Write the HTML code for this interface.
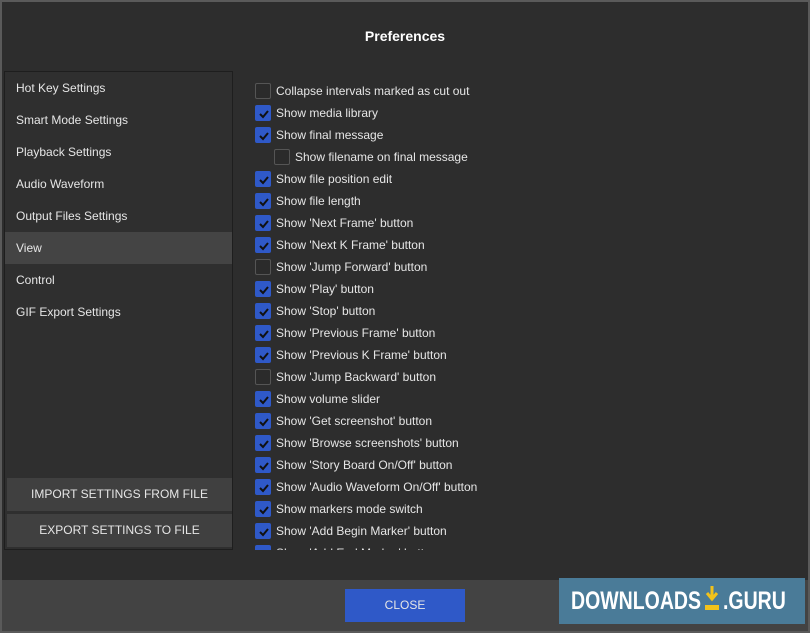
<!DOCTYPE html>
<html><head><style>
body{margin:0;width:810px;height:633px;background:#5a5a5a;font-family:"Liberation Sans",sans-serif;overflow:hidden;position:relative}
.win{position:absolute;left:2px;top:2px;width:806px;height:629px;background:#2d2d2d}
.title{position:absolute;top:28px;width:810px;text-align:center;color:#fff;font-weight:bold;font-size:14px;left:0}
.left{position:absolute;left:4px;top:71px;width:229px;height:479px;border:1px solid #1e1e1e;background:#2f2f2f;box-sizing:border-box}
.it{position:absolute;left:11px;color:#e6e6e6;font-size:12px}
.sel{position:absolute;left:0;top:160px;width:227px;height:32px;background:#444}
.btn{position:absolute;left:2px;width:225px;height:33px;background:#404040;color:#e6e6e6;font-size:12px;text-align:center;line-height:33px}
.row{position:absolute;left:255px;height:22px;color:#e6e6e6;font-size:12px;line-height:16px}
.cb{position:absolute;left:0;top:0;width:16px;height:16px;box-sizing:border-box;border:1px solid #555;background:#2b2b2b;border-radius:2px}
.cb.c{background:#2f59c8;border-color:#2f59c8}
.cb.c svg{position:absolute;left:2px;top:2px}
.lb{position:absolute;left:21px;top:0;white-space:nowrap}
.foot{position:absolute;left:2px;top:580px;width:806px;height:51px;background:#434343}
.close{position:absolute;left:345px;top:589px;width:120px;height:33px;background:#2f59c8;color:#e6e6e6;font-size:12px;text-align:center;line-height:33px}
.wm{position:absolute;left:559px;top:578px;width:246px;height:46px;background:#4a7b98;color:#fff;font-weight:bold;font-size:25px;line-height:46px}
.wm span{position:absolute;transform-origin:0 50%;transform:scaleX(0.78);white-space:nowrap}
</style></head><body>
<div class="win"></div>
<div class="title">Preferences</div>
<div class="left">
<div class="sel"></div>
<div class="it" style="top:9px">Hot Key Settings</div>
<div class="it" style="top:41px">Smart Mode Settings</div>
<div class="it" style="top:73px">Playback Settings</div>
<div class="it" style="top:105px">Audio Waveform</div>
<div class="it" style="top:137px">Output Files Settings</div>
<div class="it" style="top:169px">View</div>
<div class="it" style="top:201px">Control</div>
<div class="it" style="top:233px">GIF Export Settings</div>
<div class="btn" style="top:406px">IMPORT SETTINGS FROM FILE</div>
<div class="btn" style="top:442px">EXPORT SETTINGS TO FILE</div>
</div>
<div style="position:absolute;left:250px;top:80px;width:300px;height:470px;overflow:hidden">
<div style="position:absolute;left:-250px;top:-80px;width:600px;height:640px">
<div class="row" style="top:83px"><div class="cb"></div><div class="lb">Collapse intervals marked as cut out</div></div>
<div class="row" style="top:105px"><div class="cb c"><svg width="12" height="12"><path d="M2 6l3 3 5-6" stroke="#111" stroke-width="2" fill="none"/></svg></div><div class="lb">Show media library</div></div>
<div class="row" style="top:127px"><div class="cb c"><svg width="12" height="12"><path d="M2 6l3 3 5-6" stroke="#111" stroke-width="2" fill="none"/></svg></div><div class="lb">Show final message</div></div>
<div class="row" style="top:149px;left:274px"><div class="cb"></div><div class="lb">Show filename on final message</div></div>
<div class="row" style="top:171px"><div class="cb c"><svg width="12" height="12"><path d="M2 6l3 3 5-6" stroke="#111" stroke-width="2" fill="none"/></svg></div><div class="lb">Show file position edit</div></div>
<div class="row" style="top:193px"><div class="cb c"><svg width="12" height="12"><path d="M2 6l3 3 5-6" stroke="#111" stroke-width="2" fill="none"/></svg></div><div class="lb">Show file length</div></div>
<div class="row" style="top:215px"><div class="cb c"><svg width="12" height="12"><path d="M2 6l3 3 5-6" stroke="#111" stroke-width="2" fill="none"/></svg></div><div class="lb">Show 'Next Frame' button</div></div>
<div class="row" style="top:237px"><div class="cb c"><svg width="12" height="12"><path d="M2 6l3 3 5-6" stroke="#111" stroke-width="2" fill="none"/></svg></div><div class="lb">Show 'Next K Frame' button</div></div>
<div class="row" style="top:259px"><div class="cb"></div><div class="lb">Show 'Jump Forward' button</div></div>
<div class="row" style="top:281px"><div class="cb c"><svg width="12" height="12"><path d="M2 6l3 3 5-6" stroke="#111" stroke-width="2" fill="none"/></svg></div><div class="lb">Show 'Play' button</div></div>
<div class="row" style="top:303px"><div class="cb c"><svg width="12" height="12"><path d="M2 6l3 3 5-6" stroke="#111" stroke-width="2" fill="none"/></svg></div><div class="lb">Show 'Stop' button</div></div>
<div class="row" style="top:325px"><div class="cb c"><svg width="12" height="12"><path d="M2 6l3 3 5-6" stroke="#111" stroke-width="2" fill="none"/></svg></div><div class="lb">Show 'Previous Frame' button</div></div>
<div class="row" style="top:347px"><div class="cb c"><svg width="12" height="12"><path d="M2 6l3 3 5-6" stroke="#111" stroke-width="2" fill="none"/></svg></div><div class="lb">Show 'Previous K Frame' button</div></div>
<div class="row" style="top:369px"><div class="cb"></div><div class="lb">Show 'Jump Backward' button</div></div>
<div class="row" style="top:391px"><div class="cb c"><svg width="12" height="12"><path d="M2 6l3 3 5-6" stroke="#111" stroke-width="2" fill="none"/></svg></div><div class="lb">Show volume slider</div></div>
<div class="row" style="top:413px"><div class="cb c"><svg width="12" height="12"><path d="M2 6l3 3 5-6" stroke="#111" stroke-width="2" fill="none"/></svg></div><div class="lb">Show 'Get screenshot' button</div></div>
<div class="row" style="top:435px"><div class="cb c"><svg width="12" height="12"><path d="M2 6l3 3 5-6" stroke="#111" stroke-width="2" fill="none"/></svg></div><div class="lb">Show 'Browse screenshots' button</div></div>
<div class="row" style="top:457px"><div class="cb c"><svg width="12" height="12"><path d="M2 6l3 3 5-6" stroke="#111" stroke-width="2" fill="none"/></svg></div><div class="lb">Show 'Story Board On/Off' button</div></div>
<div class="row" style="top:479px"><div class="cb c"><svg width="12" height="12"><path d="M2 6l3 3 5-6" stroke="#111" stroke-width="2" fill="none"/></svg></div><div class="lb">Show 'Audio Waveform On/Off' button</div></div>
<div class="row" style="top:501px"><div class="cb c"><svg width="12" height="12"><path d="M2 6l3 3 5-6" stroke="#111" stroke-width="2" fill="none"/></svg></div><div class="lb">Show markers mode switch</div></div>
<div class="row" style="top:523px"><div class="cb c"><svg width="12" height="12"><path d="M2 6l3 3 5-6" stroke="#111" stroke-width="2" fill="none"/></svg></div><div class="lb">Show 'Add Begin Marker' button</div></div>
<div class="row" style="top:545px"><div class="cb c"></div><div class="lb">Show 'Add End Marker' button</div></div>
</div></div>
<div class="foot"></div>
<div class="close">CLOSE</div>
<div class="wm"><span style="left:12px">DOWNLOADS</span><svg style="position:absolute;left:144px;top:7px" width="18" height="30"><path d="M9 1v12M4 8l5 6 5-6" stroke="#f2c21b" stroke-width="3" fill="none"/><rect x="2" y="20" width="14" height="5" fill="#f2c21b"/></svg><span style="left:164px">.GURU</span></div>
</body></html>
